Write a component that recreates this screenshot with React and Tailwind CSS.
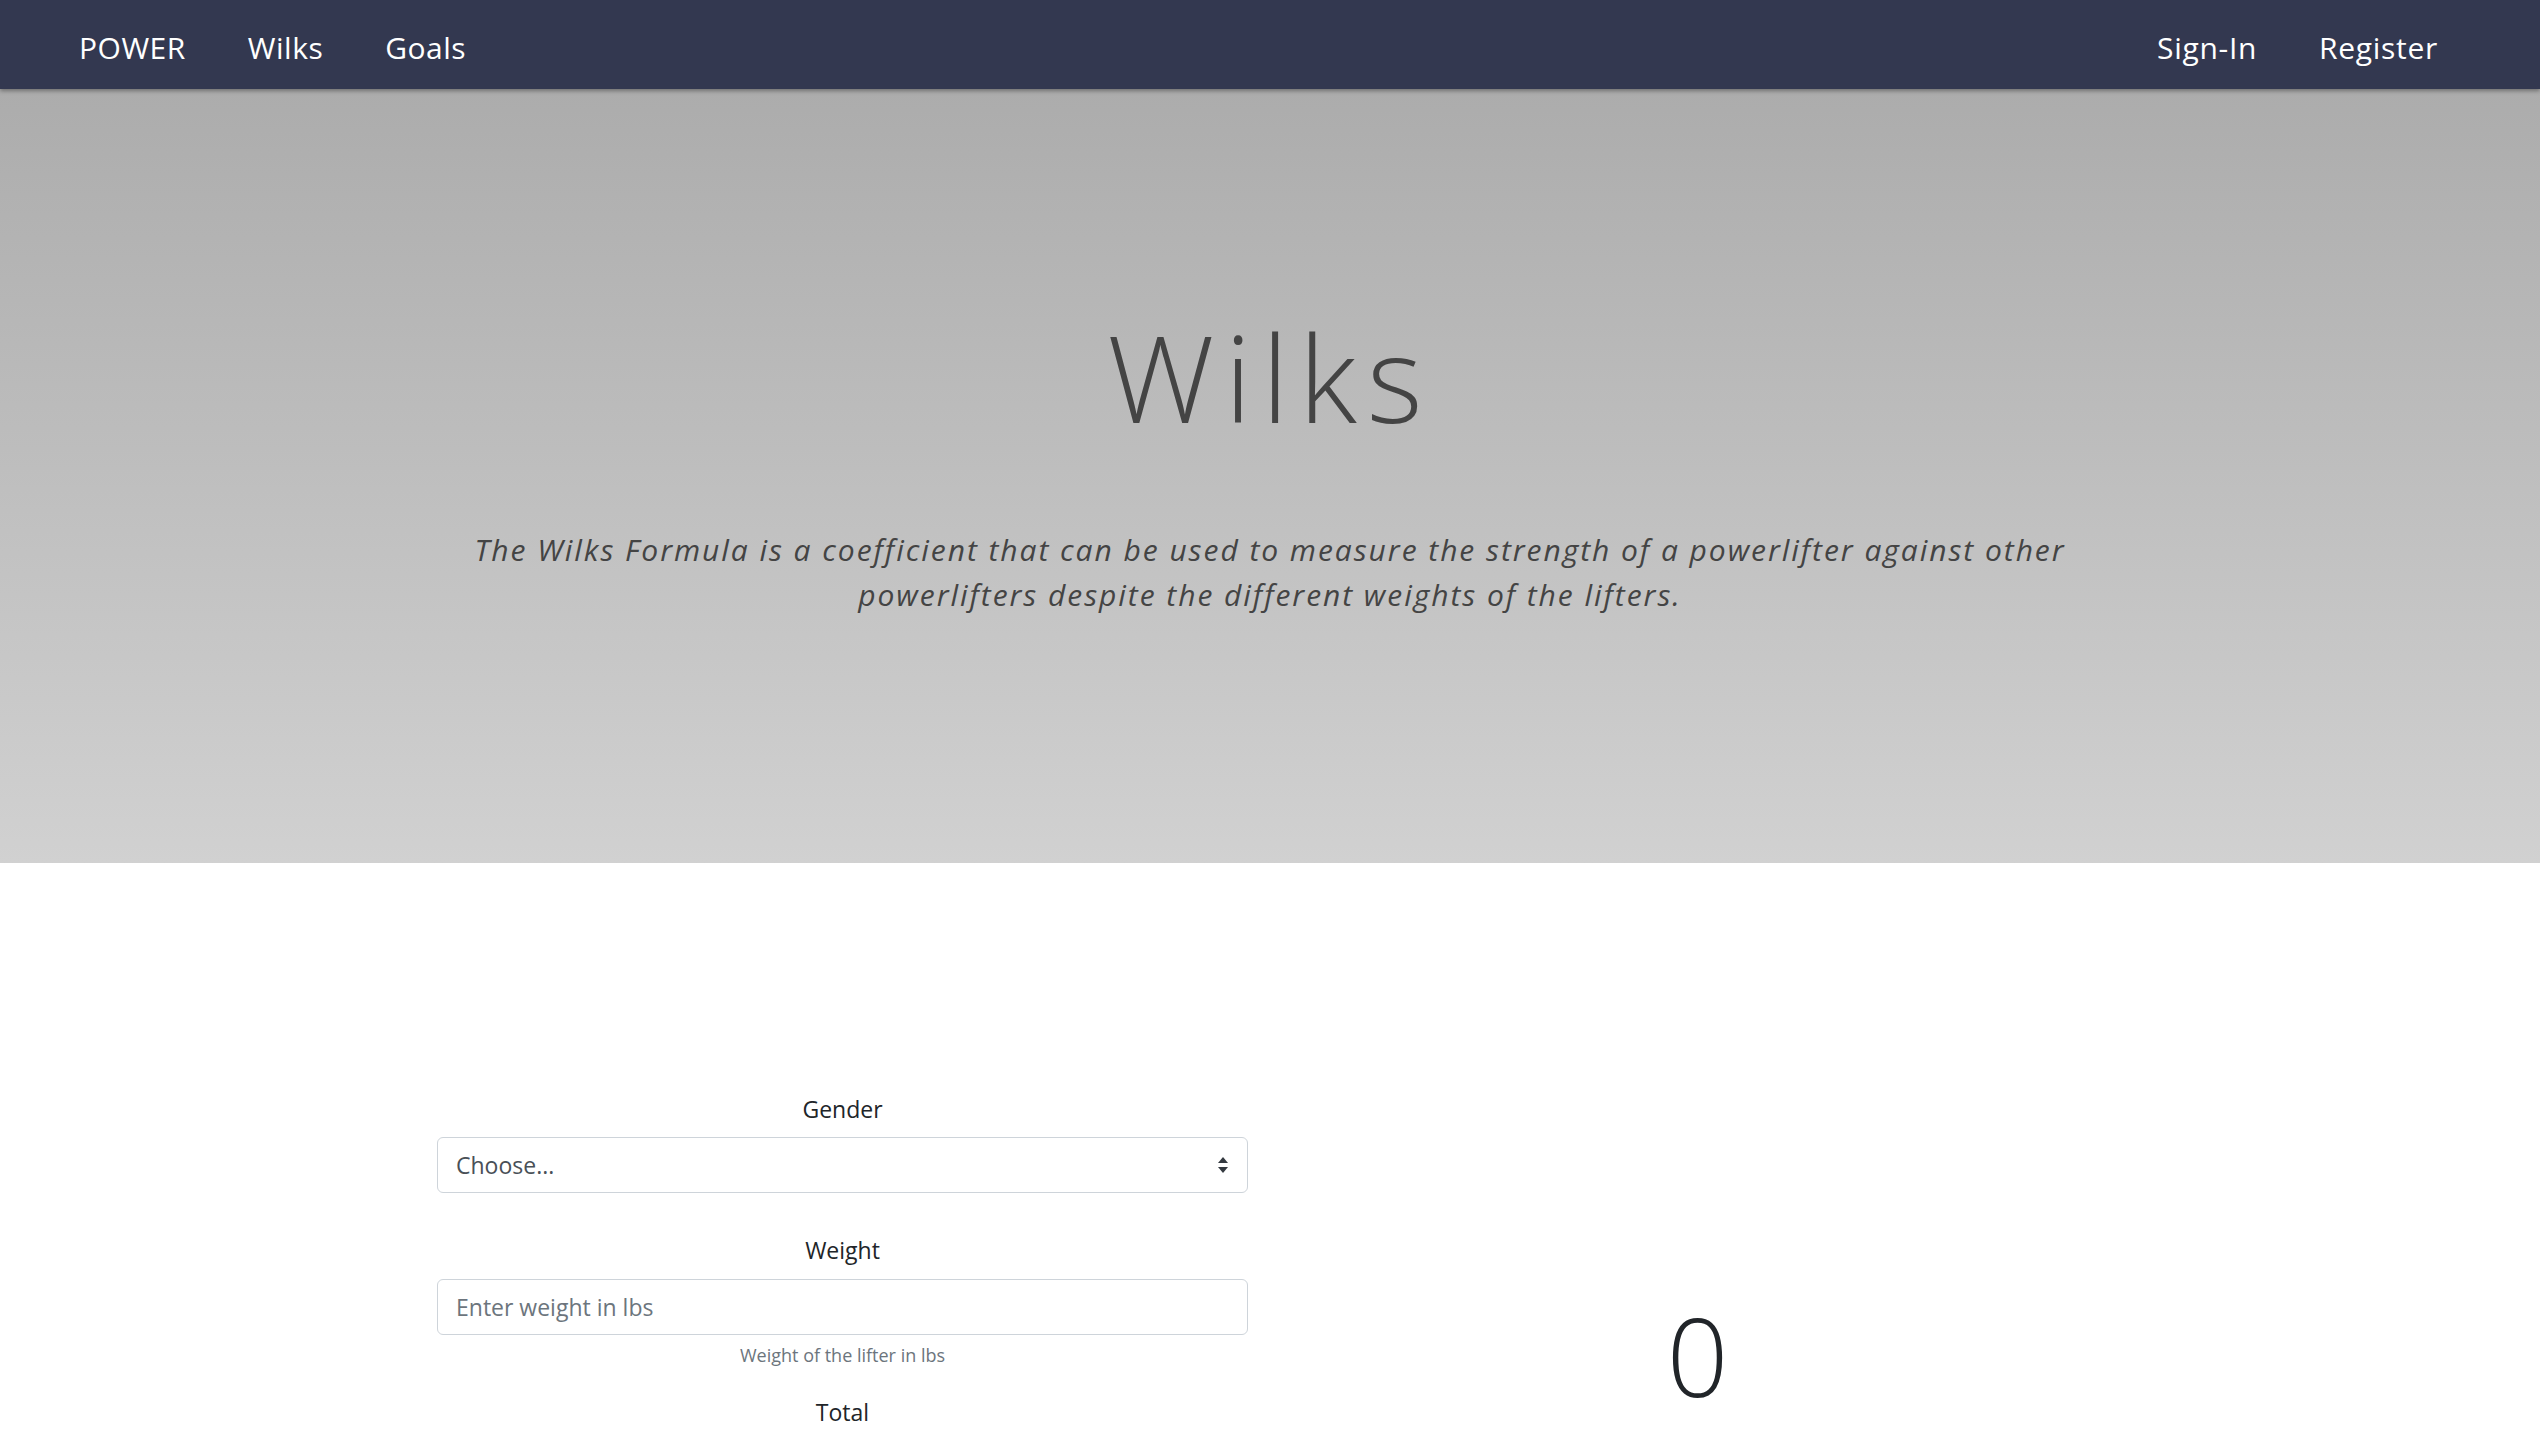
export default function App() {
  const font = { fontFamily: '"Open Sans", "Noto Sans", sans-serif' };
  return (
    <div className="min-h-screen bg-white" style={font}>
      <nav className="relative z-10 flex h-[89px] items-center justify-between bg-[#333850] pl-[79px] pr-[102px] pt-[5px] shadow-[0_2px_4px_rgba(0,0,0,0.35)]">
        <div className="flex items-center gap-[62px] text-[30px] tracking-[0.5px] text-white">
          <span>POWER</span>
          <span>Wilks</span>
          <span>Goals</span>
        </div>
        <div className="flex items-center gap-[62px] text-[30px] tracking-[0.7px] text-white">
          <span>Sign-In</span>
          <span>Register</span>
        </div>
      </nav>
      <section className="flex h-[774px] flex-col items-center bg-gradient-to-b from-[#acacac] to-[#d1d1d1] pt-[216px]">
        <h1 className="text-[120px] font-light leading-[144px] tracking-[10px] text-[#444444]">Wilks</h1>
        <p className="mt-[78px] w-[1660px] text-center text-[30px] italic leading-[45px] tracking-[1.95px] text-[#444444]">
          The Wilks Formula is a coefficient that can be used to measure the strength of a powerlifter against other powerlifters despite the different weights of the lifters.
        </p>
      </section>
      <section className="mx-auto grid w-[1710px] grid-cols-2 pt-[228px]">
        <div className="flex flex-col items-center px-[22px]">
          <label className="text-[23px] leading-[36px] text-[#212529]">Gender</label>
          <div className="mt-[10px] flex h-[56px] w-full items-center justify-between rounded-[6px] border border-[#ced4da] px-[18px] text-[23px] text-[#495057]">
            <span>Choose...</span>
            <svg width="12" height="20" viewBox="0 0 12 20">
              <path d="M6 2 L11 8 L1 8 Z" fill="#343a40" />
              <path d="M6 18 L11 12 L1 12 Z" fill="#343a40" />
            </svg>
          </div>
          <label className="mt-[39px] text-[23px] leading-[36px] text-[#212529]">Weight</label>
          <div className="mt-[11px] flex h-[56px] w-full items-center rounded-[6px] border border-[#ced4da] px-[18px] text-[23px] text-[#6c757d]">
            <span>Enter weight in lbs</span>
          </div>
          <span className="mt-[6px] text-[18px] leading-[29px] text-[#6c757d]">Weight of the lifter in lbs</span>
          <label className="mt-[24px] text-[23px] leading-[36px] text-[#212529]">Total</label>
        </div>
        <div className="flex items-start justify-center px-[22px] pt-[200px]">
          <span className="text-[108px] font-light leading-[130px] text-[#212529]">0</span>
        </div>
      </section>
    </div>
  );
}
